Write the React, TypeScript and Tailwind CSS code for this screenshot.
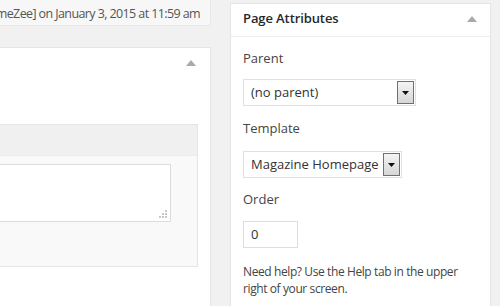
import React from "react";

function SelectArrow() {
  return (
    <div className="flex h-full w-[17px] items-center justify-center border border-[#707070] bg-gradient-to-b from-[#f4f4f4] to-[#d6d6d6]">
      <svg width="7" height="4" viewBox="0 0 7 4">
        <polygon points="0,0 7,0 3.5,4" fill="#111" />
      </svg>
    </div>
  );
}

function Triangle() {
  return (
    <svg width="10" height="6" viewBox="0 0 10 6">
      <polygon points="5,0 10,6 0,6" fill="#aaa" />
    </svg>
  );
}

export default function App() {
  return (
    <div
      className="flex h-[306px] w-[500px] overflow-hidden bg-[#f1f1f1] text-[13px] text-[#444]"
      style={{ fontFamily: '"Open Sans", "Noto Sans", sans-serif' }}
    >
      {/* left column */}
      <div className="flex w-[211px] shrink-0 flex-col">
        <div className="flex h-[26px] items-center justify-end overflow-hidden whitespace-nowrap rounded-br-[3px] border-b border-r border-[#e8e8e8] bg-[#f7f7f7] pr-[10px] pt-[4px] text-[12.5px] tracking-[-0.6px] text-[#555]">
          meZee] on January 3, 2015 at 11:59 am
        </div>
        <div className="mt-[21px] flex flex-1 flex-col border-r border-t border-[#e5e5e5] bg-white">
          <div className="flex h-[30px] items-start justify-end pr-[14px] pt-[12px]">
            <Triangle />
          </div>
          <div className="mt-[46px] mr-[12px] flex h-[143px] flex-col border-b border-r border-t border-[#e5e5e5]">
            <div className="h-[31px] border-b border-[#ececec] bg-[#f0f0f0]" />
            <div className="flex-1 bg-[#f9f9f9] pr-[26px] pt-[8px]">
              <div className="relative h-[58px] border-b border-r border-t border-[#dcdcdc] bg-white">
                <svg className="absolute bottom-[2px] right-[2px]" width="9" height="9" viewBox="0 0 9 9">
                  <rect x="6" y="0" width="2" height="2" fill="#c8c8c8" />
                  <rect x="3" y="3" width="2" height="2" fill="#c8c8c8" />
                  <rect x="6" y="3" width="2" height="2" fill="#c8c8c8" />
                  <rect x="0" y="6" width="2" height="2" fill="#c8c8c8" />
                  <rect x="3" y="6" width="2" height="2" fill="#c8c8c8" />
                  <rect x="6" y="6" width="2" height="2" fill="#c8c8c8" />
                </svg>
              </div>
            </div>
          </div>
        </div>
      </div>

      {/* right column */}
      <div className="ml-[19px] mt-[3px] flex w-[261px] shrink-0 flex-col border-l border-r border-t border-[#e5e5e5] bg-white">
        <div className="flex h-[33px] shrink-0 items-center justify-between border-b border-[#eeeeee] pb-[2px] pl-[12px] pr-[13px]">
          <span className="text-[13px] font-semibold tracking-[-0.1px] text-[#23282d]">Page Attributes</span>
          <Triangle />
        </div>
        <div className="flex flex-col px-[12px]">
          <div className="mt-[12px] leading-[18px]">Parent</div>
          <div className="mt-[12px] flex h-[27px] w-[173px] items-center justify-between border border-[#e0e0e0] bg-white py-[1px] pl-[7px] pr-[1px] text-[#333]">
            <span>(no parent)</span>
            <SelectArrow />
          </div>
          <div className="mt-[13px] leading-[18px]">Template</div>
          <div className="mt-[14px] flex h-[27px] w-[159px] items-center justify-between border border-[#e0e0e0] bg-white py-[1px] pl-[7px] pr-[1px] text-[#333]">
            <span>Magazine Homepage</span>
            <SelectArrow />
          </div>
          <div className="mt-[12px] leading-[18px]">Order</div>
          <div className="mt-[13px] flex h-[27px] w-[55px] items-center border border-[#dddddd] bg-white pl-[7px] text-[#333]">
            0
          </div>
          <div className="mt-[15px] text-[12px] leading-[17px] tracking-[-0.4px]">
            Need help? Use the Help tab in the upper right of your screen.
          </div>
        </div>
      </div>
    </div>
  );
}
